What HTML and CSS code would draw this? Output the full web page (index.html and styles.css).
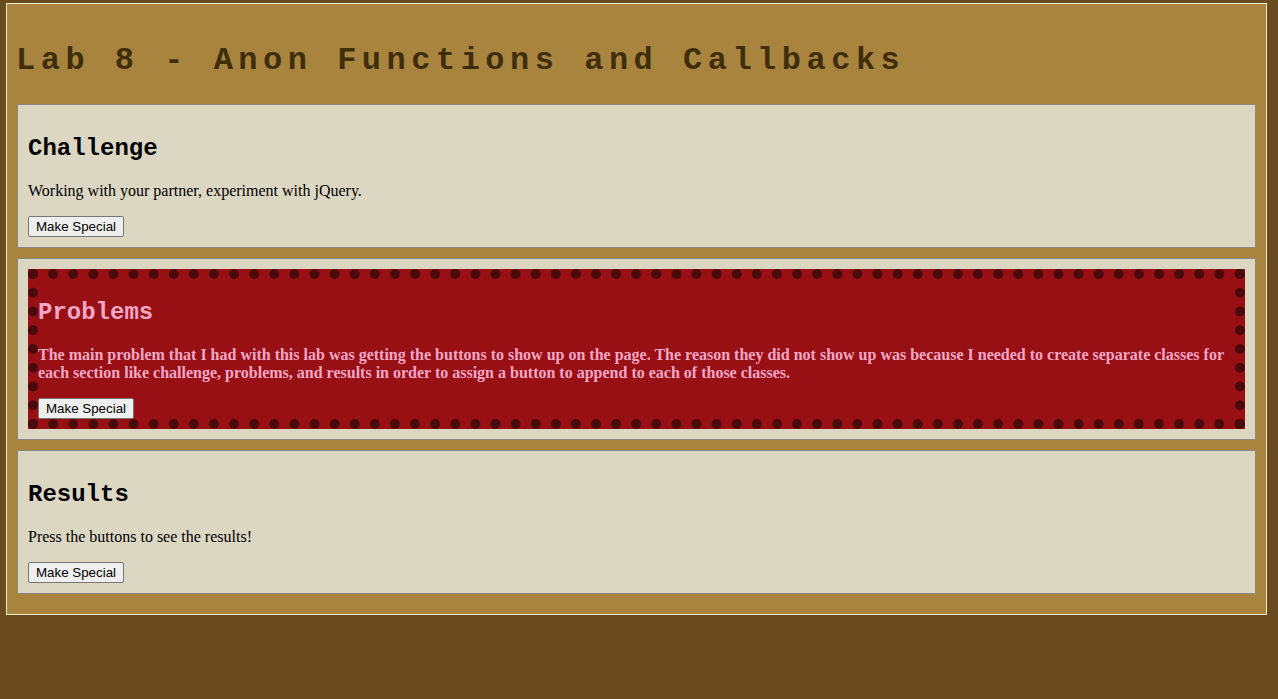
FILE: index.html
```html
<!DOCTYPE html>
<html>
<head>
<meta charset="utf-8">
<title>Lab 8</title>
<link rel="stylesheet" href="styles.css">
</head>
<body>
<div class="container">
  <h1 class="title">Lab 8 - Anon Functions and Callbacks</h1>
  <section class="panel challenge">
    <div class="inner">
      <h2>Challenge</h2>
      <p>Working with your partner, experiment with jQuery.</p>
      <button class="btn">Make Special</button>
    </div>
  </section>
  <section class="panel problems">
    <div class="inner special">
      <h2>Problems</h2>
      <p>The main problem that I had with this lab was getting the buttons to show up on the page. The reason they did not show up was because I needed to create separate classes for each section like challenge, problems, and results in order to assign a button to append to each of those classes.</p>
      <button class="btn">Make Special</button>
    </div>
  </section>
  <section class="panel results">
    <div class="inner">
      <h2>Results</h2>
      <p>Press the buttons to see the results!</p>
      <button class="btn">Make Special</button>
    </div>
  </section>
</div>
</body>
</html>
```
FILE: styles.css
```css
html, body {
  margin: 0;
  padding: 0;
}
html {
  background: #6a4a1f;
}
body {
  font-family: "Liberation Serif", "Times New Roman", serif;
  font-size: 16px;
  padding: 3px 11px 0 6px;
}
.container {
  background: #a9843f;
  border: 1px solid #f3ead2;
  padding: 0 10px 10px 10px;
  display: flow-root;
}
.title {
  font-family: "Liberation Mono", "Courier New", monospace;
  font-weight: bold;
  font-size: 32px;
  line-height: 36px;
  letter-spacing: 5.5px;
  color: #3f2e0c;
  margin: 39px 0 25px -1px;
}
.panel {
  background: #dcd7c3;
  border: 1px solid #8c8a80;
  padding: 10px;
  margin-bottom: 10px;
}
.panel h2 {
  font-family: "Liberation Mono", "Courier New", monospace;
  font-weight: bold;
  font-size: 24px;
  margin: 20px 0;
  color: #000;
}
.panel p {
  margin: 16px 0;
  color: #000;
}
.btn {
  font-family: Arial, "Liberation Sans", sans-serif;
  font-size: 13.33px;
  color: #000;
  background: #efefef;
  border: 1px solid #767676;
  border-radius: 2px;
  padding: 2px 7px;
  margin: 0;
}
.special {
  background: #981014;
  border: 10px dotted #4a0a0b;
}
.special h2,
.special p {
  color: #f4a6c6;
}
.special p {
  font-weight: bold;
}
```
